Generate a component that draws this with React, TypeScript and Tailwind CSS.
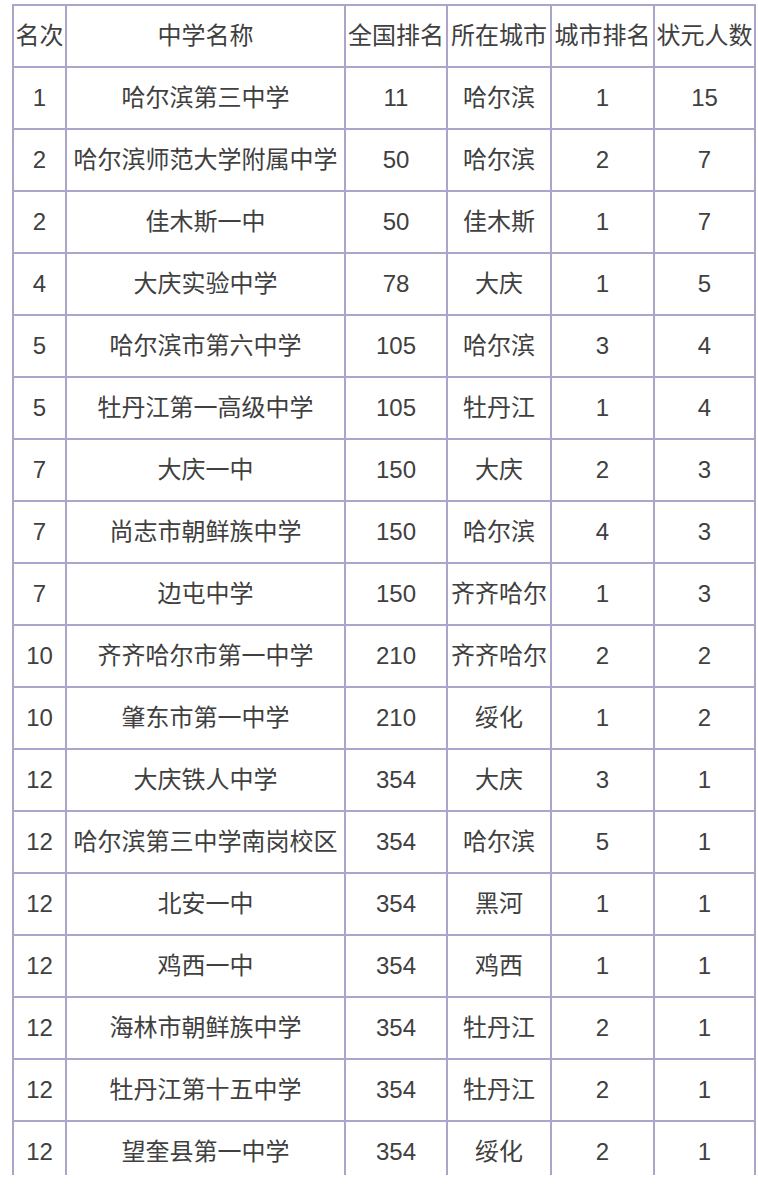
const headers = ["名次", "中学名称", "全国排名", "所在城市", "城市排名", "状元人数"];

const rows: [string, string, string, string, string, string][] = [
  ["1", "哈尔滨第三中学", "11", "哈尔滨", "1", "15"],
  ["2", "哈尔滨师范大学附属中学", "50", "哈尔滨", "2", "7"],
  ["2", "佳木斯一中", "50", "佳木斯", "1", "7"],
  ["4", "大庆实验中学", "78", "大庆", "1", "5"],
  ["5", "哈尔滨市第六中学", "105", "哈尔滨", "3", "4"],
  ["5", "牡丹江第一高级中学", "105", "牡丹江", "1", "4"],
  ["7", "大庆一中", "150", "大庆", "2", "3"],
  ["7", "尚志市朝鲜族中学", "150", "哈尔滨", "4", "3"],
  ["7", "边屯中学", "150", "齐齐哈尔", "1", "3"],
  ["10", "齐齐哈尔市第一中学", "210", "齐齐哈尔", "2", "2"],
  ["10", "肇东市第一中学", "210", "绥化", "1", "2"],
  ["12", "大庆铁人中学", "354", "大庆", "3", "1"],
  ["12", "哈尔滨第三中学南岗校区", "354", "哈尔滨", "5", "1"],
  ["12", "北安一中", "354", "黑河", "1", "1"],
  ["12", "鸡西一中", "354", "鸡西", "1", "1"],
  ["12", "海林市朝鲜族中学", "354", "牡丹江", "2", "1"],
  ["12", "牡丹江第十五中学", "354", "牡丹江", "2", "1"],
  ["12", "望奎县第一中学", "354", "绥化", "2", "1"],
];

const cell =
  "h-[62px] border-2 border-[#aba6c9] p-0 text-center align-middle whitespace-nowrap";

export default function App() {
  return (
    <div className="h-[1190px] w-[758px] bg-white">
      <div className="h-[1175px] overflow-hidden pl-[12px] pt-[4px]">
        <table
          className="table-fixed border-collapse text-[24px] leading-none text-[#404040]"
          style={{ width: 742 }}
        >
          <colgroup>
            <col className="w-[53px]" />
            <col className="w-[279px]" />
            <col className="w-[102px]" />
            <col className="w-[104px]" />
            <col className="w-[103px]" />
            <col className="w-[101px]" />
          </colgroup>
          <thead>
            <tr className="font-['Liberation_Sans','Noto_Sans_CJK_SC',sans-serif]">
              {headers.map((h) => (
                <th key={h} className={`${cell} font-normal`}>
                  {h}
                </th>
              ))}
            </tr>
          </thead>
          <tbody className="font-['Liberation_Sans','Noto_Sans_CJK_SC',sans-serif]">
            {rows.map((r, i) => (
              <tr key={i}>
                {r.map((v, j) => (
                  <td key={j} className={cell}>
                    {v}
                  </td>
                ))}
              </tr>
            ))}
          </tbody>
        </table>
      </div>
    </div>
  );
}
